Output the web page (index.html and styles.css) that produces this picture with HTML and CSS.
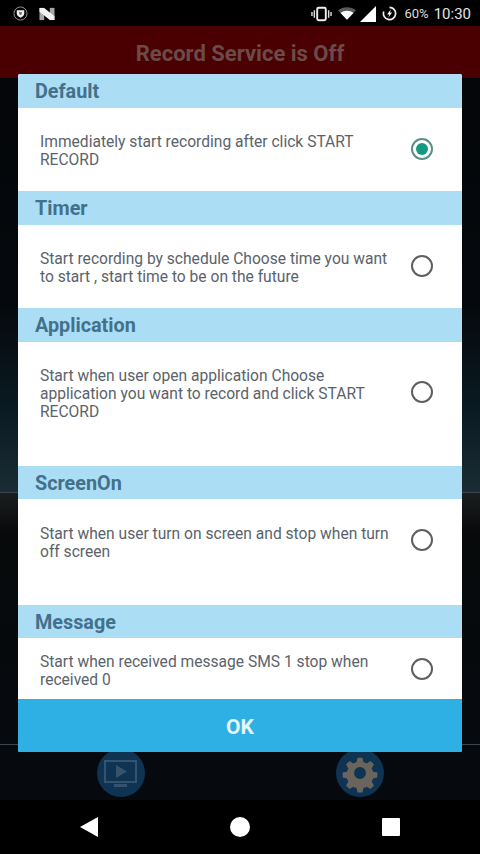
FILE: index.html
```html
<!DOCTYPE html>
<html lang="en">
<head>
<meta charset="utf-8">
<title>Record Service</title>
<link rel="stylesheet" href="styles.css">
</head>
<body>
<div class="screen">
  <div class="status">
    <div class="status-left">
      <svg class="ic-shield" viewBox="0 0 16 16"><circle cx="8" cy="8" r="7" fill="none" stroke="#9a9a9a" stroke-width="1"/><path d="M4 4.500h8v3.500c0 2.200-2 3.500-4 4.500-2-1-4-2.300-4-4.500z" fill="#f0f0f0"/><path d="M6.500 6.500h3v1.500c0 .8-.7 1.400-1.500 1.800-.8-.4-1.500-1-1.500-1.800z" fill="#777"/></svg>
      <svg class="ic-n" viewBox="0 0 18 16"><path d="M1 2h5v13H1z" fill="#a8a8a8"/><path d="M12 2h5v13h-5z" fill="#a8a8a8"/><path d="M1 2h5l11 9v4h-5L1 6z" fill="#f2f2f2"/></svg>
    </div>
    <div class="status-right">
      <svg class="ic-vib" viewBox="0 0 22 16"><rect x="6.500" y="1.500" width="9" height="13" rx="1.500" fill="none" stroke="#eee" stroke-width="2"/><path d="M3.500 4v8M18.500 4v8M1 6v4M21 6v4" stroke="#ddd" stroke-width="1.500"/></svg>
      <svg class="ic-wifi" viewBox="0 0 20 14"><path d="M0 3.500C5.500-1 14.500-1 20 3.500L10 14z" fill="#5a5a5a"/><path d="M2.800 6.500C7 3 13 3 17.200 6.500L10 14z" fill="#fff"/></svg>
      <svg class="ic-sig" viewBox="0 0 16 16"><path d="M0 16L16 0v16z" fill="#fff"/></svg>
      <svg class="ic-bat" viewBox="0 0 16 16"><path d="M8 1.500a6.500 6.500 0 1 1-6.100 4.300" fill="none" stroke="#eee" stroke-width="1.800"/><path d="M9.500 3.500L5.500 9h2.300L6.700 12.500l4-5.500H8.400z" fill="#fff"/></svg>
      <span class="pct">60%</span>
      <span class="clock">10:30</span>
    </div>
  </div>
  <div class="appbar">Record Service is Off</div>
  <div class="content">
    <div class="glow"></div>
    <div class="rule"></div>
    <div class="lower"></div>
    <div class="rule"></div>
    <div class="dock">
      <svg class="tab" viewBox="0 0 48 48"><circle cx="24" cy="24" r="24" fill="#0f3352"/><rect x="8" y="12" width="31" height="21" fill="none" stroke="#35536d" stroke-width="2"/><path d="M19 16l11 6.500L19 29z" fill="#35536d"/><rect x="17" y="35" width="13" height="3" fill="#35536d"/></svg>
      <svg class="tab" viewBox="0 0 48 48"><circle cx="24" cy="24" r="24" fill="#0f3352"/><path fill="#6a645c" fill-rule="evenodd" d="M21 6h6l1 5 4 1.700 4.300-2.800 4.200 4.200-2.800 4.300 1.700 4 5 1v6l-5 1-1.700 4 2.800 4.300-4.200 4.200-4.300-2.800-4 1.700-1 5h-6l-1-5-4-1.700-4.300 2.800-4.200-4.200 2.800-4.300-1.700-4-5-1v-6l5-1 1.700-4L7.500 14.100l4.200-4.200 4.300 2.800 4-1.700zM24 17a7 7 0 1 0 0 14 7 7 0 0 0 0-14z" transform="translate(3.600 3.600) scale(.85)"/></svg>
    </div>
  </div>
  <div class="navbar">
    <svg class="nav-back" viewBox="0 0 18 20"><path d="M18 0v20L0 10z" fill="#fff"/></svg>
    <span class="nav-home"></span>
    <span class="nav-recent"></span>
  </div>

  <div class="dialog">
    <div class="list">
      <section class="opt">
        <h2 class="opt-title">Default</h2>
        <div class="opt-body h84">
          <p class="opt-text">Immediately start recording after click START RECORD</p>
          <span class="radio on"></span>
        </div>
      </section>
      <section class="opt">
        <h2 class="opt-title">Timer</h2>
        <div class="opt-body h84">
          <p class="opt-text">Start recording by schedule Choose time you want to start , start time to be on the future</p>
          <span class="radio"></span>
        </div>
      </section>
      <section class="opt">
        <h2 class="opt-title">Application</h2>
        <div class="opt-body h124">
          <p class="opt-text">Start when user open application Choose application you want to record and click START RECORD</p>
          <span class="radio"></span>
        </div>
      </section>
      <section class="opt">
        <h2 class="opt-title">ScreenOn</h2>
        <div class="opt-body h105">
          <p class="opt-text">Start when user turn on screen and stop when turn off screen</p>
          <span class="radio"></span>
        </div>
      </section>
      <section class="opt">
        <h2 class="opt-title">Message</h2>
        <div class="opt-body h61">
          <p class="opt-text">Start when received message SMS 1 stop when received 0</p>
          <span class="radio"></span>
        </div>
      </section>
    </div>
    <button class="ok">OK</button>
  </div>
</div>
</body>
</html>
```
FILE: styles.css
```css
* { box-sizing: border-box; }
html, body { margin: 0; padding: 0; }
body { background: #000; font-family: Roboto, "Liberation Sans", sans-serif; }
.screen { position: relative; width: 480px; height: 854px; display: flex; flex-direction: column; overflow: hidden; background: #000; }

.status { height: 26px; background: #000; display: flex; justify-content: space-between; align-items: center; padding: 1px 9px 0 13px; }
.status-left, .status-right { display: flex; align-items: center; }
.ic-shield { width: 15px; height: 15px; }
.ic-n { width: 18px; height: 15px; margin-left: 10px; }
.ic-vib { width: 21px; height: 16px; margin-right: 6px; }
.ic-wifi { width: 18px; height: 13px; margin-right: 4px; }
.ic-sig { width: 16px; height: 16px; margin-right: 6px; }
.ic-bat { width: 15px; height: 15px; margin-right: 8px; }
.pct { font-size: 13px; color: #dcdcdc; margin-right: 5px; }
.clock { font-size: 15px; color: #e4e4e4; }

.appbar { height: 52px; background: #4a0000; color: #6b4a4a; font-size: 22px; font-weight: 700; text-align: center; line-height: 55px; }

.content { flex: 1; display: flex; flex-direction: column; background: #06090e; }
.glow { height: 414px; background: linear-gradient(#040609 0, #05090d 55%, #0a1a22 80%, #1a2c34 100%); }
.lower { flex: 1; background: linear-gradient(#1b1e1e 0, #07090a 40px, #06090e 100%); }
.rule { height: 1px; flex: none; background: #3f464b; }
.dock { flex: none; height: 55px; padding: 0 96px 0 97px; display: flex; justify-content: space-between; align-items: flex-start; }
.tab { display: block; width: 48px; height: 48px; margin-top: 4px; }

.navbar { height: 54px; background: #000; display: flex; align-items: center; padding: 0 80px; justify-content: space-between; }
.nav-back { width: 18px; height: 20px; }
.nav-home { width: 20px; height: 20px; border-radius: 50%; background: #fff; }
.nav-recent { width: 18px; height: 18px; background: #fff; border-radius: 1px; }

.dialog { position: absolute; left: 18px; top: 74px; width: 444px; height: 678px; display: flex; flex-direction: column; background: #fff; border-radius: 2px; overflow: hidden; }
.list { flex: 1; }
.opt-title { margin: 0; height: 33.500px; background: #abdef5; color: #44708c; font-size: 19.800px; font-weight: 700; line-height: 36px; padding-left: 17px; }
.opt-body { display: flex; align-items: center; justify-content: space-between; padding: 0 29px 0 22px; background: #fff; }
.h84 { height: 83.500px; }
.h124 { height: 124px; align-items: flex-start; }
.h105 { height: 105.500px; align-items: flex-start; }
.h61 { height: 61px; }
.h61 .opt-text { margin-top: 2px; }
.h124 .opt-text { margin-top: 22px; }
.h124 .radio { margin-top: 39px; }
.h105 .opt-text { margin-top: 23px; }
.h105 .radio { margin-top: 30px; }
.opt-text { margin: 0; width: 352px; font-size: 15.600px; line-height: 18px; color: #5a636b; padding-top: 3px; }
.radio { width: 22px; height: 22px; border-radius: 50%; border: 2px solid #5f5f5f; background: #fff; flex: none; position: relative; }
.radio.on { border-color: #5a8f86; }
.radio.on::after { content: ""; position: absolute; left: 3px; top: 3px; width: 12px; height: 12px; border-radius: 50%; background: #129a82; }

.ok { flex: none; height: 53px; border: 0; padding: 2px 0 0; background: #2fb0e4; color: #e8f7fd; font: 700 21px Roboto, "Liberation Sans", sans-serif; text-align: center; }
```
